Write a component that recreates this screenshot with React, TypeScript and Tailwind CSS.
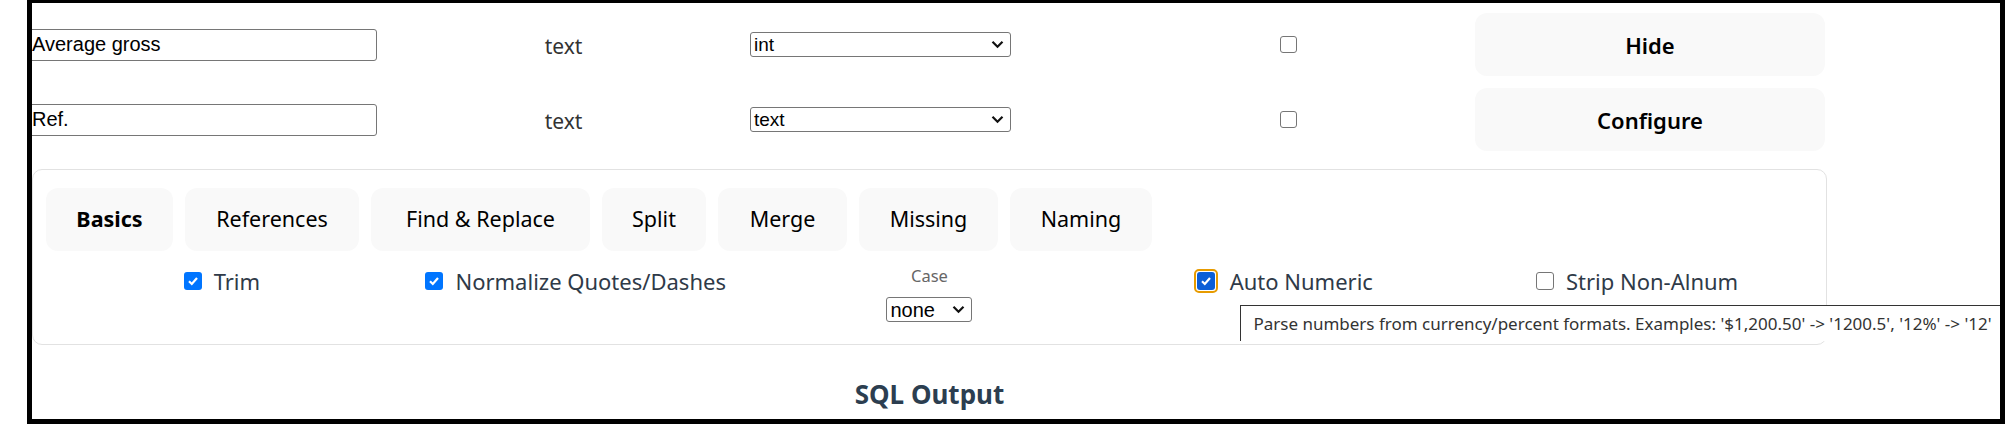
import React from 'react';

const sans = "font-['Noto_Sans',sans-serif]";
const arial = "font-['Liberation_Sans',Arial,sans-serif]";

const Chevron = () => (
  <svg width="13" height="9" viewBox="0 0 13 9" className="shrink-0">
    <path d="M1.5 1.8 L6.5 6.8 L11.5 1.8" fill="none" stroke="#111" strokeWidth="2.2" />
  </svg>
);

const FakeSelect = ({ value, className }: { value: string; className: string }) => (
  <div
    className={`flex items-center justify-between rounded-[3px] border border-[#767676] bg-white pl-[3px] pr-[6px] text-[19px] leading-none text-black ${arial} ${className}`}
  >
    <span>{value}</span>
    <Chevron />
  </div>
);

const Box = ({ checked, size = 18, focused = false }: { checked: boolean; size?: number; focused?: boolean }) => {
  const box = checked ? (
    <span
      className={`flex items-center justify-center rounded-[3px] ${focused ? 'bg-[#0b5ed7]' : 'bg-[#0075ff]'}`}
      style={{ width: size, height: size }}
    >
      <svg width={size - 6} height={size - 6} viewBox="0 0 12 12">
        <path d="M2 6.3 L4.8 9 L10 3" fill="none" stroke="white" strokeWidth="2.2" />
      </svg>
    </span>
  ) : (
    <span
      className="block rounded-[3px] border-[1.5px] border-[#767676] bg-white"
      style={{ width: size, height: size }}
    />
  );
  if (!focused) return box;
  return <span className="rounded-[5px] border-2 border-[#e79b00] p-[1px]">{box}</span>;
};

const tabs = [
  { label: 'Basics', w: 'w-[127px]', active: true },
  { label: 'References', w: 'w-[174px]' },
  { label: 'Find & Replace', w: 'w-[219px]' },
  { label: 'Split', w: 'w-[104px]' },
  { label: 'Merge', w: 'w-[129px]' },
  { label: 'Missing', w: 'w-[139px]' },
  { label: 'Naming', w: 'w-[142px]' },
];

const FieldRow = ({ name, type, button }: { name: string; type: string; button: string }) => (
  <div className="flex h-[63px] items-center">
    <input
      readOnly
      defaultValue={name}
      className={`-ml-[3px] h-[32px] w-[348px] rounded-[3px] border border-[#767676] px-[2px] text-[20px] text-black outline-none ${arial}`}
    />
    <div className={`w-[373px] pt-[4px] text-center text-[21px] text-[#333] ${sans}`}>text</div>
    <FakeSelect value={type} className="h-[25px] w-[261px]" />
    <div className="ml-[269px]">
      <Box checked={false} size={17} />
    </div>
    <button
      className={`ml-[178px] h-[63px] w-[350px] rounded-[12px] bg-[#f9f9f9] pt-[2px] text-[22px] font-semibold text-black ${sans}`}
    >
      {button}
    </button>
  </div>
);

const Check = ({ label, checked, focused }: { label: string; checked: boolean; focused?: boolean }) => (
  <div className={`flex h-[32px] items-center justify-center gap-[12px] text-[22px] text-[#2f3a48] ${sans}`}>
    <Box checked={checked} focused={focused} />
    <span>{label}</span>
  </div>
);

export default function App() {
  return (
    <div className="h-[433px] w-[2008px] bg-white">
      <div className="ml-[27px] h-[424px] w-[1978px] overflow-hidden border-[5px] border-t-[3px] border-black">
        <div className="w-[1795px] pt-[10px]">
          <FieldRow name="Average gross" type="int" button="Hide" />
          <div className="mt-[12px]">
            <FieldRow name="Ref." type="text" button="Configure" />
          </div>

          <div className="mt-[18px] h-[176px] rounded-[10px] border border-[#e2e2e2] px-[12px] pt-[18px]">
            <div className="ml-[1px] flex gap-[12px]">
              {tabs.map((t) => (
                <button
                  key={t.label}
                  className={`h-[63px] ${t.w} rounded-[12px] bg-[#f9f9f9] text-center text-[21.5px] text-black ${sans} ${t.active ? 'font-bold' : 'font-normal'}`}
                >
                  {t.label}
                </button>
              ))}
            </div>

            <div className="mt-[14px] grid grid-cols-5 items-start">
              <Check label="Trim" checked />
              <Check label="Normalize Quotes/Dashes" checked />
              <div className={`flex flex-col items-center ${sans}`}>
                <span className="text-[16.5px] leading-[21px] text-[#666]">Case</span>
                <FakeSelect value="none" className="mt-[11px] h-[25px] w-[86px] !text-[20px]" />
              </div>
              <div className="relative">
                <Check label="Auto Numeric" checked focused />
                <div
                  className={`absolute left-[134px] top-[40px] z-10 h-[36px] whitespace-nowrap border border-b-0 border-[#333] bg-white pl-[12px] pr-[14px] text-[17px] leading-[36px] text-[#333] ${sans}`}
                >
                  Parse numbers from currency/percent formats. Examples: '$1,200.50' -&gt; '1200.5', '12%' -&gt; '12'
                </div>
              </div>
              <Check label="Strip Non-Alnum" checked={false} />
            </div>
          </div>

          <h2 className={`mt-[33px] text-center text-[26px] font-bold leading-[32px] text-[#2c3e50] ${sans}`}>
            SQL Output
          </h2>
        </div>
      </div>
    </div>
  );
}
